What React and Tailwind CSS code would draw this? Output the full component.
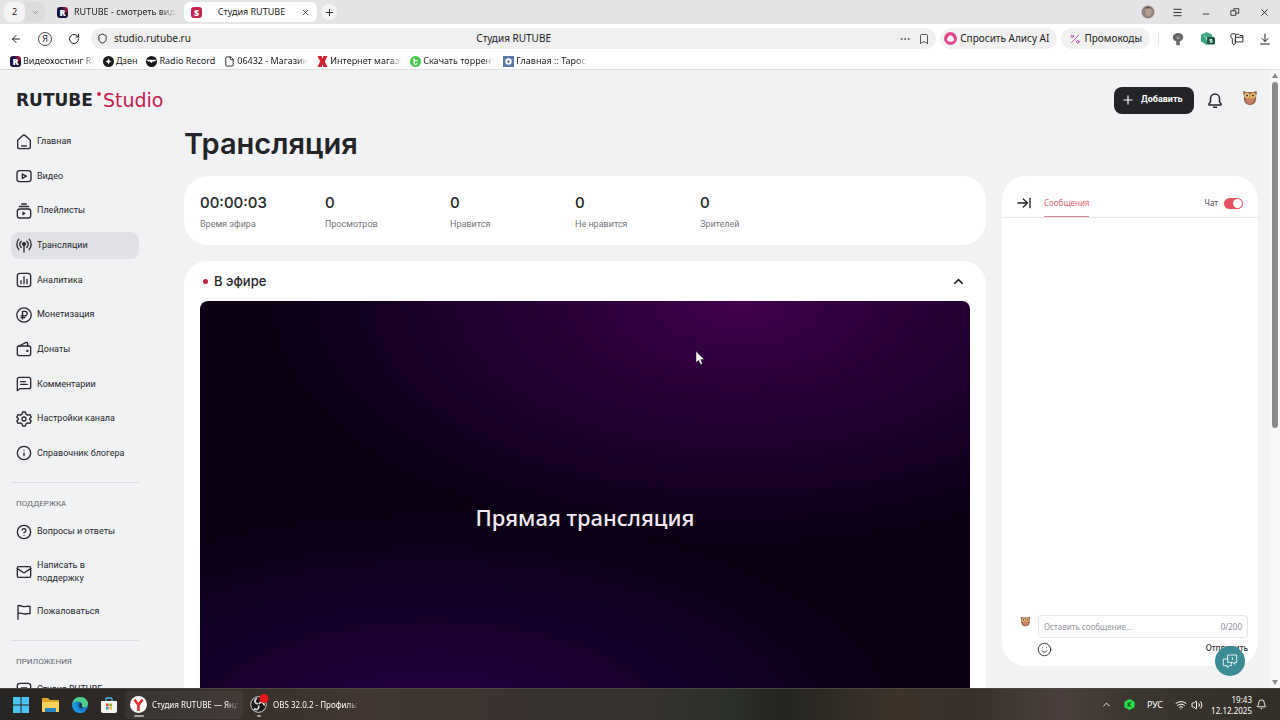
import React from 'react';
import {
  ArrowLeft, RotateCw, Shield, Bookmark, Ellipsis, Menu, X, Minus, Plus, ChevronDown, ChevronUp,
  Percent, Download, File, Bell, ArrowRightToLine, Smile, Mail, Info, CircleHelp, Volume2, Wifi,
} from 'lucide-react';

const UI = "font-['Noto_Sans','Open_Sans',sans-serif]";
const BODY = "font-['Roboto','Liberation_Sans',sans-serif]";
const WIDE = "font-['Inter','Liberation_Sans',sans-serif]";

const FADE = '[mask-image:linear-gradient(to_right,black_85%,transparent)]';

const Stroke = ({ children, className = 'size-4 shrink-0' }) => (
  <svg viewBox="0 0 24 24" className={className} fill="none" stroke="currentColor" strokeWidth="2" strokeLinecap="round" strokeLinejoin="round" aria-hidden="true">
    {children}
  </svg>
);

const HomeIcon = () => (
  <Stroke>
    <path d="M2.500 9.500 10.300 2.300a2.500 2.500 0 0 1 3.400 0l7.800 7.200V19a3 3 0 0 1-3 3h-13a3 3 0 0 1-3-3z" />
    <path d="M8.500 18h7" />
  </Stroke>
);

const VideoIcon = () => (
  <Stroke>
    <rect x="1.500" y="4" width="21" height="16.500" rx="4" />
    <path d="m9.500 9 6 3.200-6 3.300z" />
  </Stroke>
);

const PlaylistIcon = () => (
  <Stroke>
    <rect x="2" y="9" width="20" height="13.500" rx="3.500" />
    <path d="M5 5.200h14M8.500 1.500h7" />
    <path d="m10.500 13.500 3.500 2.200-3.500 2.200z" fill="currentColor" strokeWidth="1" />
  </Stroke>
);

const BroadcastIcon = () => (
  <Stroke>
    <path d="M4.200 3.200a12 12 0 0 0 0 15.600M19.800 3.200a12 12 0 0 1 0 15.600M7.800 6.300a7 7 0 0 0 0 9.400M16.200 6.300a7 7 0 0 1 0 9.400M12 12v10.500" />
    <circle cx="12" cy="10.500" r="2" fill="currentColor" />
  </Stroke>
);

const ChartIcon = () => (
  <Stroke>
    <rect x="2" y="2" width="20" height="20" rx="4" />
    <path d="M7.500 13v4.500M12 7v10.500M16.500 11v6.500" />
  </Stroke>
);

const RubleIcon = () => (
  <Stroke>
    <circle cx="12" cy="12" r="10.800" />
    <path d="M9.800 18V6.500h3.700a3.300 3.300 0 0 1 0 6.700H7.500M7.500 16h6" />
  </Stroke>
);

const WalletIcon = () => (
  <Stroke>
    <rect x="2" y="7.500" width="20" height="14.500" rx="3" />
    <path d="M4 7.500 15.500 2.200a1.500 1.500 0 0 1 2 1.500v3.800" />
    <circle cx="17" cy="14.800" r="0.800" fill="currentColor" />
  </Stroke>
);

const CommentIcon = () => (
  <Stroke>
    <path d="M2 22V5a3 3 0 0 1 3-3h14a3 3 0 0 1 3 3v11a3 3 0 0 1-3 3H6z" />
    <path d="M7 8.500h7M7 12.500h10" />
  </Stroke>
);

const GearIcon = () => (
  <Stroke>
    <path d="M10 1.500h4l1 3.200 2.600 1.500 3.300-.7 2 3.500-2.300 2.300v1.400l2.300 2.300-2 3.500-3.300-.7-2.600 1.500-1 3.200h-4l-1-3.200-2.600-1.500-3.300.7-2-3.500 2.300-2.300v-1.400L1.100 9l2-3.500 3.300.7L9 4.700z" />
    <circle cx="12" cy="12" r="3" />
  </Stroke>
);

const InfoIcon = () => <Info className="size-4 shrink-0" strokeWidth={2} />;
const HelpIcon = () => <CircleHelp className="size-4 shrink-0" strokeWidth={2} />;
const MailIcon = () => <Mail className="size-4 shrink-0" strokeWidth={2} />;

const FlagIcon = () => (
  <Stroke>
    <path d="M3 23V2.500c4-1.500 6 2 10 1.500 3-.3 5-1 8-.5v11c-3-.5-5 .5-8 .5-4 0-6-2.500-10-1" />
  </Stroke>
);

const AppIcon = () => (
  <Stroke>
    <rect x="2" y="2" width="20" height="20" rx="4" />
    <path d="M8 9h8v6H8z" />
  </Stroke>
);

const RutubeMark = ({ letter, className }) => (
  <span className={`grid size-[11px] shrink-0 place-items-center rounded-[3px] text-[9px] leading-none font-black text-white ${className}`} aria-hidden="true">
    {letter}
  </span>
);

const RUTUBE_BG = 'bg-[radial-gradient(circle_at_100%_0%,#e0224e_0%,#1b1140_45%)]';

const Owl = ({ className }) => (
  <svg viewBox="0 0 32 32" className={className} aria-hidden="true">
    <path d="M3 2c4 2 8 2 13 2s9 0 13-2c1 4 1 7-1 10 2 8-2 18-12 18S2 20 4 12C2 9 2 6 3 2z" fill="#9a6248" />
    <path d="M8 15h16c1 7-2 13-8 13S7 22 8 15z" fill="#c9806a" />
    <circle cx="10" cy="11" r="5.500" fill="#e9c27a" />
    <circle cx="22" cy="11" r="5.500" fill="#e9c27a" />
    <circle cx="10" cy="11" r="2.200" fill="#4a3430" />
    <circle cx="22" cy="11" r="2.200" fill="#4a3430" />
    <path d="m16 12 2.500 4-2.500 3-2.500-3z" fill="#e39a3c" />
  </svg>
);

const bookmarks = [
  { label: 'Видеохостинг RU', clip: true, icon: <RutubeMark letter="R" className={RUTUBE_BG} /> },
  {
    label: 'Дзен',
    icon: (
      <svg viewBox="0 0 24 24" className="size-[11px] shrink-0">
        <circle cx="12" cy="12" r="12" fill="#1c1c1c" />
        <path d="M12 3c.4 6.500 2.500 8.600 9 9-6.500.4-8.600 2.500-9 9-.4-6.500-2.500-8.600-9-9 6.500-.4 8.600-2.500 9-9z" fill="#fff" />
      </svg>
    ),
  },
  {
    label: 'Radio Record',
    icon: (
      <svg viewBox="0 0 24 24" className="size-[11px] shrink-0">
        <circle cx="12" cy="12" r="12" fill="#151515" />
        <path d="M1 8h22l-4 4H15l-3 3-3-3H5z" fill="#fff" />
      </svg>
    ),
  },
  { label: '06432 - Магазины', clip: true, icon: <File className="size-[11px] shrink-0" strokeWidth={2} /> },
  {
    label: 'Интернет магази',
    clip: true,
    icon: (
      <svg viewBox="0 0 24 24" className="size-[11px] shrink-0">
        <path d="M1 0h9l2 6 2-6h9l-6 12 6 12h-9l-2-6-2 6H1l6-12z" fill="#d3202f" />
      </svg>
    ),
  },
  {
    label: 'Скачать торрент',
    clip: true,
    icon: (
      <svg viewBox="0 0 24 24" className="size-[11px] shrink-0">
        <circle cx="12" cy="12" r="12" fill="#45c84c" />
        <path d="M9 5v10a3 3 0 0 0 6 1M9 10h7" fill="none" stroke="#fff" strokeWidth="3" />
      </svg>
    ),
  },
  {
    label: 'Главная :: Tapoche',
    clip: true,
    icon: (
      <svg viewBox="0 0 24 24" className="size-[11px] shrink-0">
        <path d="M0 0h24v24H0z" fill="#5a79a8" />
        <circle cx="12" cy="12" r="5" fill="none" stroke="#fff" strokeWidth="4" />
      </svg>
    ),
  },
];

const menu = [
  { label: 'Главная', Icon: HomeIcon },
  { label: 'Видео', Icon: VideoIcon },
  { label: 'Плейлисты', Icon: PlaylistIcon },
  { label: 'Трансляции', Icon: BroadcastIcon, active: true },
  { label: 'Аналитика', Icon: ChartIcon },
  { label: 'Монетизация', Icon: RubleIcon },
  { label: 'Донаты', Icon: WalletIcon },
  { label: 'Комментарии', Icon: CommentIcon },
  { label: 'Настройки канала', Icon: GearIcon },
  { label: 'Справочник блогера', Icon: InfoIcon },
];

const support = [
  { label: 'Вопросы и ответы', Icon: HelpIcon },
  { label: 'Написать в поддержку', Icon: MailIcon, wrap: true },
  { label: 'Пожаловаться', Icon: FlagIcon },
];

const stats = [
  { value: '00:00:03', label: 'Время эфира' },
  { value: '0', label: 'Просмотров' },
  { value: '0', label: 'Нравится' },
  { value: '0', label: 'Не нравится' },
  { value: '0', label: 'Зрителей' },
];

const TabBar = () => (
  <div className="flex h-6 shrink-0 items-center bg-[#e4e4e4] text-[9px] text-[#222]">
    <div className="ml-1 flex h-5 w-[41px] overflow-hidden rounded-md bg-[#dcdcdc]">
      <button className="w-[21px] rounded-md bg-[#f4f4f4]">2</button>
      <button className="grid flex-1 place-items-center text-[#777]" aria-label="Список вкладок"><ChevronDown className="size-[9px]" /></button>
    </div>
    <button className="ml-3 flex w-[119px] items-center gap-1.5 whitespace-nowrap">
      <RutubeMark letter="R" className={RUTUBE_BG} />
      <span className={`overflow-hidden ${FADE}`}>RUTUBE - смотреть виде</span>
    </button>
    <div className="ml-2 flex h-5 w-[133px] items-center justify-between rounded-md bg-white px-[7px]">
      <RutubeMark letter="S" className="bg-[#c4214f]" />
      <span>Студия RUTUBE</span>
      <button aria-label="Закрыть вкладку"><X className="size-[9px]" /></button>
    </div>
    <button className="ml-1 grid size-4 place-items-center rounded-full bg-[#f4f4f4]" aria-label="Новая вкладка"><Plus className="size-[11px]" /></button>
    <div className="ml-auto flex items-center gap-[15px] pr-[9px]">
      <svg viewBox="0 0 14 14" className="size-[14px]">
        <circle cx="7" cy="7" r="6.500" fill="#8f8480" />
        <ellipse cx="7.500" cy="6.500" rx="3.200" ry="4.500" fill="#b59d92" />
        <path d="M4 3.500C5 1.500 9 1.500 10.500 4L9 3.500z" fill="#5d5350" />
      </svg>
      <button className="grid size-[14px] place-items-center" aria-label="Меню"><Menu className="size-[11px]" /></button>
      <button className="grid size-[14px] place-items-center pt-1" aria-label="Свернуть"><Minus className="size-[10px]" /></button>
      <button className="grid size-[14px] place-items-center" aria-label="Восстановить">
        <Stroke className="size-[10px]"><path d="M3 9h11v11H3zM9 9V4h12v11h-7" /></Stroke>
      </button>
      <button className="grid size-[14px] place-items-center" aria-label="Закрыть"><X className="size-[11px]" /></button>
    </div>
  </div>
);

const Toolbar = () => (
  <div className="flex h-[29px] shrink-0 items-center bg-white pr-[9px] text-[10px] text-[#222]">
    <div className="flex w-[91px] items-center gap-[15px] pl-[9px]">
      <button className="grid size-[14px] place-items-center" aria-label="Назад"><ArrowLeft className="size-3" /></button>
      <button className="grid size-[14px] place-items-center rounded-full border border-[#444] text-[9px] leading-none">Я</button>
      <button className="grid size-[14px] place-items-center" aria-label="Обновить"><RotateCw className="size-3" /></button>
    </div>
    <div className="flex h-[21px] flex-1 items-center rounded-full bg-[#efefef] px-1.5">
      <div className="flex flex-1 items-center gap-1.5">
        <Shield className="size-[11px]" />
        <span>studio.rutube.ru</span>
      </div>
      <span>Студия RUTUBE</span>
      <div className="flex flex-1 items-center justify-end gap-[7px] text-[#555]">
        <Ellipsis className="size-3" />
        <Bookmark className="size-3" />
      </div>
    </div>
    <button className="ml-1 flex h-[21px] items-center gap-[3px] rounded-full bg-[#f1f1f1] pr-2 pl-1 whitespace-nowrap">
      <svg viewBox="0 0 24 24" className="size-[13px]">
        <circle cx="12" cy="12" r="12" fill="#e5478f" />
        <path d="M12 6c3 0 6.500 5.500 6.500 8.500S15 18 12 18s-6.500-.5-6.500-3.500S9 6 12 6z" fill="#fff" />
      </svg>
      Спросить Алису AI
    </button>
    <button className="ml-1 flex h-[21px] items-center gap-[3px] rounded-full bg-[#f1f1f1] px-2">
      <Percent className="size-3 text-[#c74bb5]" strokeWidth={2} />
      Промокоды
    </button>
    <div className="mx-2 h-3 w-px bg-[#e6e6e6]" />
    <div className="flex items-center gap-[15px] pl-1">
      <svg viewBox="0 0 16 16" className="size-[14px]" fill="#666">
        <path d="M8 1a6 5 0 0 0-6 5c0 2 1.500 4 4 4.500V15h4v-4.500c2.500-.5 4-2.500 4-4.500a6 5 0 0 0-6-5z" />
        <circle cx="8" cy="6.500" r="2" fill="#999" />
      </svg>
      <svg viewBox="0 0 16 16" className="size-[15px]">
        <path d="m7 1 6 3v7l-6 4-6-4V4z" fill="#3aa780" />
        <path d="m4 5 3 2v3" fill="none" stroke="#bfe8d8" strokeWidth="1" />
        <rect x="7.500" y="6.500" width="8.500" height="8" rx="2" fill="#14533d" />
        <path d="M13 9h-2.500v1.500H13V12h-2.500" fill="none" stroke="#fff" />
      </svg>
      <Stroke className="size-[14px]">
        <path d="M8 3H3L1.500 5v4L4 11v8l2.500 3L9 20v-8" strokeWidth="1.600" />
        <path d="M10 4h5l2 2h5v11H10zM10 9h12" strokeWidth="1.600" />
      </Stroke>
      <Stroke className="size-3"><path d="M12 2v15M6 11l6 6 6-6M3 22h18" /></Stroke>
    </div>
  </div>
);

const BookmarksBar = () => (
  <nav className="flex h-[17px] shrink-0 items-center gap-[9px] border-b border-[#e2e2e4] bg-white px-[10px] text-[9px] text-[#222]">
    {bookmarks.map((b) => (
      <a key={b.label} href="#" className={`flex items-center gap-[2px] whitespace-nowrap ${b.clip ? 'w-[84px]' : ''}`}>
        {b.icon}
        <span className={b.clip ? `overflow-hidden ${FADE}` : ''}>{b.label}</span>
      </a>
    ))}
  </nav>
);

const NavItem = ({ label, Icon, active, wrap }) => (
  <a
    href="#"
    className={`flex min-h-[27px] shrink-0 items-center gap-[5px] rounded-lg pl-[5px] leading-[13px] ${active ? 'bg-[#e1e2e6]' : ''}`}
  >
    <Icon />
    <span className={wrap ? 'w-16' : 'whitespace-nowrap'}>{label}</span>
  </a>
);

const Sidebar = () => (
  <aside className={`ml-[11px] w-32 shrink-0 pt-3 text-[9px] text-[#26282b] ${BODY}`}>
    <nav className="flex h-[339px] flex-col justify-between">
      {menu.map((item) => <NavItem key={item.label} {...item} />)}
    </nav>
    <hr className="mt-[15px] border-[#dcdde0]" />
    <h2 className="mt-[15px] pl-[5px] text-[8px] leading-3 text-[#63666b]">ПОДДЕРЖКА</h2>
    <nav className="mt-2 flex flex-col gap-[13px]">
      {support.map((item) => <NavItem key={item.label} {...item} />)}
    </nav>
    <hr className="mt-[15px] border-[#dcdde0]" />
    <h2 className="mt-[15px] pl-[5px] text-[8px] leading-3 text-[#63666b]">ПРИЛОЖЕНИЯ</h2>
    <nav className="mt-2">
      <NavItem label="Студия RUTUBE" Icon={AppIcon} />
    </nav>
  </aside>
);

const PageHeader = () => (
  <header className="flex h-[46px] shrink-0 items-center pt-3.5 pr-3 pl-4">
    <a href="#" className="flex items-center font-['DejaVu_Sans',sans-serif] leading-none" aria-label="RUTUBE Studio">
      <span className="text-[17px] font-bold text-[#222529]">RUTUBE</span>
      <span className="mr-0.5 mb-3 ml-1 size-1 rounded-full bg-[#e0224e]" />
      <span className="text-[19px] text-[#c3204f]">Studio</span>
    </a>
    <div className="ml-auto flex items-center">
      <button className={`flex h-[27px] w-20 items-center gap-1.5 rounded-lg bg-[#222428] pl-[7px] text-[9px] font-bold text-white ${BODY}`}>
        <Plus className="size-[14px]" strokeWidth={2} />
        Добавить
      </button>
      <button className="ml-3 text-[#222428]" aria-label="Уведомления">
        <Stroke className="size-[18px]"><path d="M4 18.500v-1.500l2-2.500V10a6 6 0 0 1 12 0v4.500l2 2.500v1.500zM10 21.500h4" /></Stroke>
      </button>
      <button className="ml-[18px] pb-1" aria-label="Профиль"><Owl className="size-4" /></button>
    </div>
  </header>
);

const Chat = () => (
  <section className={`flex h-[490px] w-64 shrink-0 flex-col rounded-3xl bg-white text-[8px] ${UI}`}>
    <div className="flex h-[42px] items-stretch border-b border-[#e8e8ea] pt-[13px] pr-[15px] pl-3.5">
      <button aria-label="Свернуть чат"><ArrowRightToLine className="size-4 text-[#1f2124]" strokeWidth={2} /></button>
      <button className="ml-3 border-b border-[#d98793] text-[#dd6274]">Сообщения</button>
      <label className="ml-auto flex items-center gap-1.5 text-[#4b4d52]">
        Чат
        <input type="checkbox" defaultChecked className="peer sr-only" />
        <span className="flex h-[11px] w-[19px] items-center justify-end rounded-full bg-[#e8505f] px-px">
          <span className="size-[9px] rounded-full bg-white" />
        </span>
      </label>
    </div>
    <div className="flex-1" />
    <div className="flex items-start gap-[7px] pr-[10px] pl-[18px]">
      <Owl className="mt-px size-[11px]" />
      <label className="flex h-[23px] flex-1 items-center rounded-sm border border-[#e6e6e9] px-[5px]">
        <input aria-label="Сообщение" placeholder="Оставить сообщение..." className="min-w-0 flex-1 outline-none placeholder:text-[#96989d]" />
        <span className="text-[#8b8d92]">0/200</span>
      </label>
    </div>
    <div className="flex items-start justify-between pt-1 pr-[10px] pb-[9px] pl-[35px] text-[#2b2d30]">
      <button aria-label="Эмодзи"><Smile className="size-[15px]" strokeWidth={1.5} /></button>
      <button className="font-medium">Отправить</button>
    </div>
  </section>
);

const Main = () => (
  <main className="ml-[45px] flex-1 pt-2 pr-3">
    <h1 className={`text-[29px] leading-10 font-semibold text-[#222428] ${WIDE}`}>Трансляция</h1>
    <div className="mt-3 flex items-start gap-4">
      <div className="flex min-w-0 flex-1 flex-col gap-4">
        <section className="flex rounded-3xl bg-white px-4 pt-[17px] pb-[15px]">
          {stats.map((s) => (
            <div key={s.label} className="w-[125px]">
              <div className={`text-[15px] leading-5 font-medium text-[#222428] ${WIDE}`}>{s.value}</div>
              <div className={`mt-[5px] text-[9px] leading-3 text-[#74777c] ${BODY}`}>{s.label}</div>
            </div>
          ))}
        </section>
        <section className="rounded-3xl bg-white px-4 pb-4">
          <div className="flex h-10 items-center pt-px pr-1 pl-[3px]">
            <span className="size-[5px] rounded-full bg-[#c31f3d]" />
            <h2 className={`ml-1.5 text-[13px] font-medium text-[#222428] ${WIDE}`}>В эфире</h2>
            <button className="ml-auto text-[#222428]" aria-label="Свернуть"><ChevronUp className="size-[15px]" strokeWidth={2.5} /></button>
          </div>
          <div className={`grid aspect-video place-items-center rounded-lg bg-[#0b0013] bg-[radial-gradient(ellipse_60%_55%_at_70%_0%,#41004b_0%,#230033_45%,transparent_100%),radial-gradient(ellipse_60%_50%_at_30%_100%,#240046_0%,#16002b_50%,transparent_100%)] text-[22px] font-medium text-[#f3eaf5] ${UI}`}>
            Прямая трансляция
          </div>
        </section>
      </div>
      <Chat />
    </div>
  </main>
);

const ScrollBar = () => (
  <div className="flex w-[10px] shrink-0 flex-col items-center justify-between bg-[#f8f8f9] py-[3px]" aria-hidden="true">
    <div className="flex flex-1 flex-col items-center gap-1">
      <svg viewBox="0 0 6 5" className="h-[5px] w-1.5"><path d="M3 0 6 5H0z" fill="#8a8a8a" /></svg>
      <div className="h-[57%] w-1.5 rounded-full bg-[#8a8a8a]" />
    </div>
    <svg viewBox="0 0 6 5" className="h-[5px] w-1.5"><path d="M0 0h6L3 5z" fill="#8a8a8a" /></svg>
  </div>
);

const TaskBar = () => (
  <footer className="flex h-8 shrink-0 items-center border-t border-[#4a4642] bg-[linear-gradient(90deg,#262523_0%,#2f2a27_10%,#40362f_28%,#3a332f_38%,#373331_50%,#2c302a_57%,#23241f_61%,#3d332b_70%,#38302a_76%,#4a3f3c_83%,#3c3630_88%,#332e28_100%)] text-[8px] text-white">
    <div className="flex items-center gap-[13px] pl-[13px]">
      <svg viewBox="0 0 16 16" className="size-4"><path d="M0 0h7.500v7.500H0zM8.500 0H16v7.500H8.500zM0 8.500h7.500V16H0zM8.500 8.500H16V16H8.500z" fill="#4cc4f4" /></svg>
      <svg viewBox="0 0 17 16" className="h-4 w-[17px]">
        <path d="M0 2a1 1 0 0 1 1-1h5l2 2h8a1 1 0 0 1 1 1v3H0z" fill="#e2a52c" />
        <path d="M0 5h17v9a1 1 0 0 1-1 1H1a1 1 0 0 1-1-1z" fill="#fbd15b" />
        <path d="M3 15v-4h11v4z" fill="#2f7fc8" />
      </svg>
      <svg viewBox="0 0 16 16" className="size-4">
        <circle cx="8" cy="8" r="8" fill="#1a78c8" />
        <path d="M.2 7C1 2.500 4.500 0 8 0c5 0 8 3.500 8 6.500C16 9 14 10.500 12 10.500c-2 0-2.500-1-2-2C10.500 6 8.500 4.500 6 4.500 3.500 4.500 1 5.500.2 7z" fill="#4fcf8b" />
        <path d="M.2 7C1.500 4.800 4 4.500 6 4.500c-2 2-2 6 1 8.500 2 1.600 5 1 6.500.500C11 17 5 17 2 13 .5 11 0 9 .2 7z" fill="#1c96de" />
        <path d="M10 8.500c-.5 1 0 2 2 2-1.500 1.500-5 .5-5-2 0-1 .5-2 1.500-2.500 1 .500 1.700 1.500 1.500 2.500z" fill="#18304a" />
      </svg>
      <svg viewBox="0 0 16 16" className="size-4">
        <path d="M5 4V2a1 1 0 0 1 1-1h4a1 1 0 0 1 1 1v2" fill="none" stroke="#4bb8ee" strokeWidth="1.300" />
        <path d="M0 4h16v10a2 2 0 0 1-2 2H2a2 2 0 0 1-2-2z" fill="#f3f3f3" />
        <path d="M5 6.500h2.700v2.700H5z" fill="#e8503a" /><path d="M8.300 6.500H11v2.700H8.300z" fill="#7ab536" />
        <path d="M5 9.800h2.700v2.700H5z" fill="#2f9fe0" /><path d="M8.300 9.800H11v2.700H8.300z" fill="#f3b722" />
      </svg>
    </div>
    <button className="ml-2 flex h-7 w-[118px] items-center gap-[5px] rounded-sm bg-white/5 pl-[5px] whitespace-nowrap">
      <span className="flex shrink-0 flex-col items-center gap-0.5 pt-1">
        <svg viewBox="0 0 17 17" className="size-[17px]">
          <circle cx="8.500" cy="8.500" r="8.500" fill="#fff" />
          <path d="m4.500 3.500 4 5.500 4-5.500M8.500 9v6" fill="none" stroke="#e5322d" strokeWidth="2.600" />
        </svg>
        <span className="h-0.5 w-[10px] rounded-full bg-[#a9a29e]" />
      </span>
      <span className={`mr-1 overflow-hidden ${FADE}`}>Студия RUTUBE — Янде</span>
    </button>
    <button className="ml-[7px] flex h-7 w-[110px] items-center gap-[5px] whitespace-nowrap">
      <span className="flex shrink-0 flex-col items-center gap-0.5 pt-1">
        <svg viewBox="0 0 18 17" className="h-[17px] w-[18px] overflow-visible">
          <circle cx="8.500" cy="8.500" r="7.800" fill="#1a1a1a" stroke="#d8d8d8" />
          <path d="M8 8C4 7 4 3.500 7 2.500M9 8c2-3.500 5.500-1.500 5 1.500M8.500 9.500c1 4-2.500 5-4.500 3" fill="none" stroke="#d8d8d8" strokeWidth="1.800" />
          <circle cx="14" cy="2.500" r="4.500" fill="#f01414" />
        </svg>
        <span className="h-0.5 w-1 rounded-full bg-[#a9a29e]" />
      </span>
      <span className={`overflow-hidden ${FADE}`}>OBS 32.0.2 - Профиль: Б</span>
    </button>
    <div className="ml-auto flex items-center pr-[13px]">
      <ChevronUp className="size-[11px]" />
      <svg viewBox="0 0 12 12" className="ml-3 size-[11px]">
        <path d="m6 0 5.500 3v6L6 12 .5 9V3z" fill="#27e04c" />
        <path d="M4.500 3.500v5M7.800 3.500 5 6l2.800 2.500" fill="none" stroke="#0d5a20" strokeWidth="1.200" />
      </svg>
      <span className="ml-3 text-[9px]">РУС</span>
      <Wifi className="ml-3 size-3" />
      <Volume2 className="ml-1 size-3" />
      <div className="ml-2 text-right leading-[11px]">
        <div>19:43</div>
        <div>12.12.2025</div>
      </div>
      <Bell className="ml-1 size-[11px]" />
    </div>
  </footer>
);

export default function App() {
  return (
    <div className={`relative flex h-screen flex-col overflow-hidden bg-[#f1f2f4] ${UI}`}>
      <TabBar />
      <Toolbar />
      <BookmarksBar />
      <div className="flex min-h-0 flex-1">
        <div className="flex min-w-0 flex-1 flex-col overflow-hidden">
          <PageHeader />
          <div className="flex min-h-0 flex-1">
            <Sidebar />
            <Main />
          </div>
        </div>
        <ScrollBar />
      </div>
      <TaskBar />

      <button className="absolute right-[35px] bottom-11 grid size-[30px] place-items-center rounded-full bg-[#3b8c95] text-white" aria-label="Помощь">
        <Stroke className="size-4">
          <path d="M9 3h13v11h-3v3l-3-3H9zM9 9H2v10h6v3l3-3h3v-5" strokeWidth="1.300" />
          <path d="M15.500 7v3" strokeWidth="1.500" />
        </Stroke>
      </button>
      <svg viewBox="0 0 12 18" className="pointer-events-none absolute top-[351px] left-[696px] h-[14px] w-[9px]" aria-hidden="true">
        <path d="M0 0v15l3.500-3 2.500 5.500 2.500-1L6.200 11H11z" fill="#fff" stroke="#222" strokeWidth="0.700" />
      </svg>
    </div>
  );
}
